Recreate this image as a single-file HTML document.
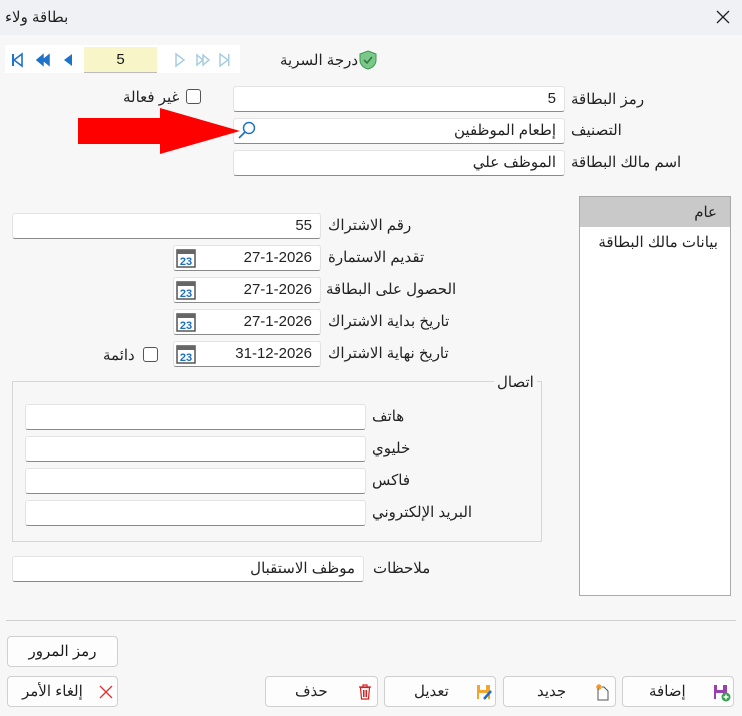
<!DOCTYPE html>
<html><head><meta charset="utf-8"><style>
body{margin:0;width:742px;height:716px;background:#f7f7f7;position:relative;overflow:hidden;font-family:"Liberation Sans","Noto Sans CJK SC",sans-serif;font-size:15px;color:#1a1a1a}
.a{position:absolute}
.in{position:absolute;background:#fff;border:1px solid #e3e3e3;border-bottom:1px solid #8a8a8a;border-radius:3px;box-sizing:border-box;text-align:right;padding-right:8px;line-height:23px;font-size:15px;color:#222}
.lb{position:absolute;direction:rtl;white-space:nowrap;font-size:15px;color:#222}
.btn{position:absolute;background:#fdfdfd;border:1px solid #d0d0d0;border-radius:4px;box-sizing:border-box;height:31px;font-size:15px;line-height:29px}
.cb{position:absolute;width:13px;height:13px;border:1px solid #555;border-radius:3px;background:#fff}
</style></head><body>
<div class="a" style="left:0;top:0;width:742px;height:35px;background:#eff1f4"></div>
<div class="lb" style="left:5px;top:8px;font-size:15px">بطاقة ولاء</div>
<svg class="a" style="left:715px;top:9px" width="16" height="16"><path d="M2 2L14 14M14 2L2 14" stroke="#222" stroke-width="1.3"/></svg>

<div class="a" style="left:5px;top:45px;width:235px;height:28px;background:#fff"></div>
<div class="a" style="left:84px;top:47px;width:73px;height:25px;background:#f8f6c8;border-bottom:1px solid #bbb;text-align:center;line-height:25px;font-size:15px">5</div>
<svg class="a" style="left:10px;top:52px" width="225" height="16">
<g fill="#1e73c8"><rect x="2" y="2" width="2" height="12"/><path d="M4 8L12 2V14Z" fill="none" stroke="#1e73c8" stroke-width="1.6"/>
<path d="M27 8L33 3V13ZM33 8L39 3V13Z" stroke="#1e73c8" stroke-width="1.5"/>
<path d="M54 8L62 2V14Z"/></g>
<g fill="#a9cde0" stroke="#a9cde0"><path d="M166 2L174 8L166 14Z" fill="none" stroke-width="1.5"/>
<path d="M187 3L193 8L187 13ZM193 3L199 8L193 13Z" fill="none" stroke-width="1.5"/>
<path d="M210 2L218 8L210 14Z" fill="none" stroke-width="1.5"/><rect x="218" y="2" width="1.5" height="12" stroke="none"/></g>
</svg>
<div class="lb" style="left:280px;top:51px">درجة السرية</div>
<svg class="a" style="left:358px;top:50px" width="20" height="20"><path d="M10 1L18 4V10C18 15 14 18 10 19C6 18 2 15 2 10V4Z" fill="#7cc88a" stroke="#3a9a4e"/><path d="M6 10L9 13L14 7" stroke="#2d7a3c" stroke-width="1.6" fill="none"/></svg>

<div class="in" style="left:233px;top:86px;width:332px;height:26px">5</div>
<div class="in" style="left:233px;top:118px;width:332px;height:26px">إطعام الموظفين</div>
<div class="in" style="left:233px;top:150px;width:332px;height:26px">الموظف علي</div>
<div class="lb" style="left:571px;top:90px">رمز البطاقة</div>
<div class="lb" style="left:571px;top:121px">التصنيف</div>
<div class="lb" style="left:571px;top:153px">اسم مالك البطاقة</div>
<svg class="a" style="left:236px;top:120px" width="22" height="20"><circle cx="13" cy="8" r="5.5" fill="none" stroke="#1e73c8" stroke-width="1.5"/><path d="M9 12L3 18" stroke="#1e73c8" stroke-width="1.8"/></svg>
<div class="cb" style="left:186px;top:89px"></div>
<div class="lb" style="left:123px;top:88px">غير فعالة</div>
<svg class="a" style="left:78px;top:108px" width="165" height="46"><path d="M0 10H82V0L162 23L82 46V36H0Z" fill="#f00"/></svg>

<div class="a" style="left:579px;top:196px;width:152px;height:400px;background:#fff;border:1px solid #aaa;box-sizing:border-box"></div>
<div class="a" style="left:580px;top:197px;width:150px;height:30px;background:#c9c9c9"></div>
<div class="lb" style="right:25px;top:203px">عام</div>
<div class="lb" style="right:24px;top:233px">بيانات مالك البطاقة</div>

<div class="in" style="left:12px;top:213px;width:309px;height:26px">55</div>
<div class="lb" style="left:328px;top:216px">رقم الاشتراك</div>
<div class="in" style="left:173px;top:245px;width:148px;height:26px">27-1-2026</div>
<div class="in" style="left:173px;top:277px;width:148px;height:26px">27-1-2026</div>
<div class="in" style="left:173px;top:309px;width:148px;height:26px">27-1-2026</div>
<div class="in" style="left:173px;top:341px;width:148px;height:26px">31-12-2026</div>
<div class="lb" style="left:328px;top:248px">تقديم الاستمارة</div>
<div class="lb" style="left:326px;top:280px">الحصول على البطاقة</div>
<div class="lb" style="left:328px;top:312px">تاريخ بداية الاشتراك</div>
<div class="lb" style="left:328px;top:344px">تاريخ نهاية الاشتراك</div>
<svg class="a" style="left:176px;top:248px" width="20" height="120">
<g id="c"><rect x="1" y="2" width="18" height="17" fill="#fff" stroke="#555" stroke-width="1.5"/><rect x="1" y="2" width="18" height="4" fill="#666"/><text x="10" y="17" font-size="11" font-weight="bold" fill="#1e6fc0" text-anchor="middle" font-family="Liberation Sans">23</text></g>
<use href="#c" y="32"/><use href="#c" y="64"/><use href="#c" y="96"/></svg>
<div class="cb" style="left:143px;top:347px"></div>
<div class="lb" style="left:103px;top:346px">دائمة</div>

<div class="a" style="left:12px;top:381px;width:530px;height:161px;border:1px solid #d6d6d6;box-sizing:border-box"></div>
<div class="lb" style="left:494px;top:373px;background:#f7f7f7;padding:0 3px">اتصال</div>
<div class="in" style="left:25px;top:404px;width:341px;height:26px"></div>
<div class="in" style="left:25px;top:436px;width:341px;height:26px"></div>
<div class="in" style="left:25px;top:468px;width:341px;height:26px"></div>
<div class="in" style="left:25px;top:500px;width:341px;height:26px"></div>
<div class="lb" style="left:372px;top:407px">هاتف</div>
<div class="lb" style="left:372px;top:439px">خليوي</div>
<div class="lb" style="left:372px;top:471px">فاكس</div>
<div class="lb" style="left:372px;top:503px">البريد الإلكتروني</div>

<div class="in" style="left:12px;top:556px;width:352px;height:26px">موظف الاستقبال</div>
<div class="lb" style="left:373px;top:559px">ملاحظات</div>

<div class="a" style="left:6px;top:620px;width:730px;height:1px;background:#d0d0d0"></div>

<div class="btn" style="left:7px;top:636px;width:111px;text-align:center">رمز المرور</div>
<div class="btn" style="left:7px;top:676px;width:111px"><span class="lb" style="left:14px;top:0">إلغاء الأمر</span><svg class="a" style="left:91px;top:8px" width="14" height="14"><path d="M1 1L13 13M13 1L1 13" stroke="#e03030" stroke-width="1.3"/></svg></div>
<div class="btn" style="left:265px;top:676px;width:113px"><span class="lb" style="left:29px;top:0">حذف</span><svg class="a" style="left:92px;top:7px" width="14" height="16"><path d="M1 3H13M5 3V1H9V3M2.5 3.5L3.5 15H10.5L11.5 3.5Z" fill="none" stroke="#d02020" stroke-width="1.2"/><path d="M5.5 6V13M7 6V13M8.5 6V13" stroke="#d02020"/></svg></div>
<div class="btn" style="left:384px;top:676px;width:112px"><span class="lb" style="left:29px;top:0">تعديل</span><svg class="a" style="left:91px;top:7px" width="17" height="17"><rect x="1" y="1" width="13" height="14" fill="#f3a530"/><rect x="4" y="1" width="6" height="5" fill="#fff"/><rect x="3" y="9" width="9" height="6" fill="#fff"/><path d="M8 15L15 7" stroke="#1e6fc0" stroke-width="2.5"/></svg></div>
<div class="btn" style="left:503px;top:676px;width:113px"><span class="lb" style="left:33px;top:0">جديد</span><svg class="a" style="left:91px;top:6px" width="16" height="18"><path d="M3 4H9L13 8V17H3Z" fill="#fff" stroke="#555"/><path d="M4 1V7M1 4H7M2 2L6 6M6 2L2 6" stroke="#f09020" stroke-width="1.2"/></svg></div>
<div class="btn" style="left:622px;top:676px;width:112px"><span class="lb" style="left:26px;top:0">إضافة</span><svg class="a" style="left:90px;top:7px" width="18" height="18"><rect x="1" y="1" width="13" height="14" fill="#9a3fb0"/><rect x="4" y="1" width="6" height="5" fill="#fff"/><rect x="3" y="9" width="7" height="6" fill="#fff"/><circle cx="13" cy="13" r="4.5" fill="#3aa050"/><path d="M13 10.5V15.5M10.5 13H15.5" stroke="#fff" stroke-width="1.4"/></svg></div>
</body></html>
